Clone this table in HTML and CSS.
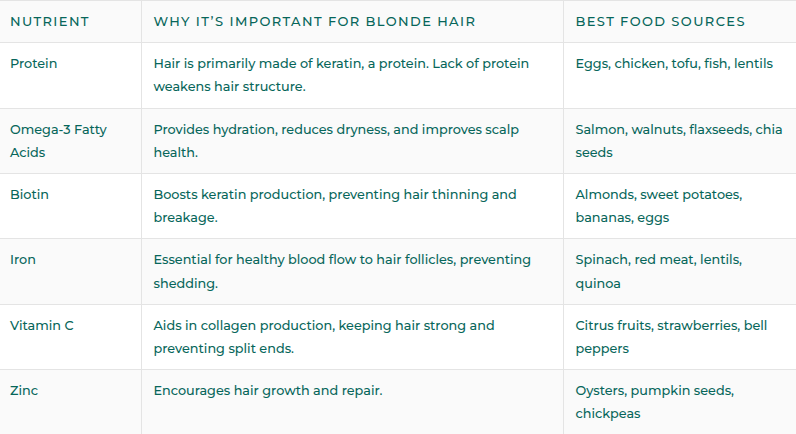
FILE: index.html
```html
<!DOCTYPE html>
<html>
<head>
<meta charset="utf-8">
<link rel="stylesheet" href="styles.css">
</head>
<body>
<table class="nutri">
  <colgroup>
    <col class="c1"><col class="c2"><col class="c3">
  </colgroup>
  <thead>
    <tr><th>Nutrient</th><th>Why It’s Important for Blonde Hair</th><th>Best Food Sources</th></tr>
  </thead>
  <tbody>
    <tr><td>Protein</td><td>Hair is primarily made of keratin, a protein. Lack of protein weakens hair structure.</td><td>Eggs, chicken, tofu, fish, lentils</td></tr>
    <tr><td>Omega-3 Fatty Acids</td><td>Provides hydration, reduces dryness, and improves scalp health.</td><td>Salmon, walnuts, flaxseeds, chia seeds</td></tr>
    <tr><td>Biotin</td><td>Boosts keratin production, preventing hair thinning and breakage.</td><td>Almonds, sweet potatoes, bananas, eggs</td></tr>
    <tr><td>Iron</td><td>Essential for healthy blood flow to hair follicles, preventing shedding.</td><td>Spinach, red meat, lentils, quinoa</td></tr>
    <tr><td>Vitamin C</td><td>Aids in collagen production, keeping hair strong and preventing split ends.</td><td>Citrus fruits, strawberries, bell peppers</td></tr>
    <tr><td>Zinc</td><td>Encourages hair growth and repair.</td><td>Oysters, pumpkin seeds, chickpeas</td></tr>
  </tbody>
</table>
</body>
</html>
```
FILE: styles.css
```css
html, body {
  margin: 0;
  padding: 0;
  background: #ffffff;
}
.nutri {
  width: 796px;
  border-collapse: collapse;
  table-layout: fixed;
  font-family: "Montserrat", "Open Sans", sans-serif;
  font-size: 12.8px;
  color: #07665a;
}
.c1 { width: 141px; }
.c2 { width: 422px; }
.c3 { width: 233px; }
.nutri th, .nutri td {
  text-align: left;
  vertical-align: top;
  padding: 9px 12px;
  line-height: 23.2px;
  border: 1px solid #e4e4e4;
}
.nutri tr > :first-child { border-left: none; padding-left: 10px; }
.nutri tr > :last-child { border-right: none; }
.nutri th {
  font-weight: 500;
  font-size: 13px;
  text-transform: uppercase;
  letter-spacing: 1.4px;
  background: #fafafa;
}
.nutri td { font-weight: 500; }
.nutri tbody tr:nth-child(even) { background: #fafafa; }
.nutri tbody tr:last-child td { border-bottom: none; }
```
